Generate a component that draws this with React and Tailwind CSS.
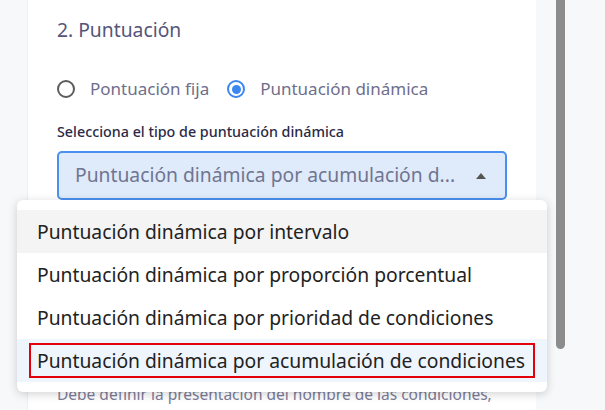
import React from 'react';

const options = [
  'Puntuación dinámica por intervalo',
  'Puntuación dinámica por proporción porcentual',
  'Puntuación dinámica por prioridad de condiciones',
  'Puntuación dinámica por acumulación de condiciones',
];

function Radio({ checked, label }) {
  return (
    <label className="flex items-center gap-[15px]">
      {checked ? (
        <span className="flex h-[18px] w-[18px] items-center justify-center rounded-full border-2 border-[#3b86f0]">
          <span className="h-[9px] w-[9px] rounded-full bg-[#3b86f0]" />
        </span>
      ) : (
        <span className="h-[18px] w-[18px] rounded-full border-2 border-[#5c5c5c]" />
      )}
      <span className="text-[17px] leading-[24px] text-[#6e6e8c]">{label}</span>
    </label>
  );
}

export default function App() {
  return (
    <div className="flex h-[410px] w-[605px] overflow-hidden bg-[#f7f8fa]" style={{ fontFamily: '"Noto Sans", "Open Sans", sans-serif' }}>
      <div className="ml-[27px] w-[509px] shrink-0 border-l border-[#eceef2] bg-white pl-[29px] pt-[16px]">
        <h2 className="text-[19.3px] leading-[28px] text-[#55557a]">2. Puntuación</h2>

        <div className="mt-[33px] flex items-center gap-[18px]">
          <Radio label="Pontuación fija" />
          <Radio checked label="Puntuación dinámica" />
        </div>

        <div className="mt-[21px] text-[14.3px] leading-[20px] font-medium text-[#2b2946]">Selecciona el tipo de puntuación dinámica</div>

        <div className="relative mt-[9px] w-[450px]">
          <div className="flex h-[49px] items-center justify-between rounded-[5px] border-2 border-[#4a90ee] bg-[#dfeafb] pl-[16px] pr-[16px]">
            <span className="whitespace-nowrap text-[19.3px] text-[#6f7590]">Puntuación dinámica por acumulación d...</span>
            <svg width="12" height="8" viewBox="0 0 12 8" className="mr-[2px]">
              <path d="M6 1 L11 7 L1 7 Z" fill="#555" />
            </svg>
          </div>

          <div className="absolute left-[-40px] top-[49px] z-10 w-[530px] rounded-[6px] bg-white py-[10px] shadow-[0_2px_10px_rgba(0,0,0,0.18)]">
            {options.map((o, i) => (
              <div
                key={o}
                className={
                  i === 0
                    ? 'flex h-[43px] items-center whitespace-nowrap bg-[#f4f4f4] px-[20px] text-[19.3px] leading-[26px] text-[#222]'
                    : i === 3
                    ? 'flex h-[43px] items-center whitespace-nowrap bg-[#eef5fd] px-[12px] text-[19.3px] leading-[26px] text-[#222]'
                    : 'flex h-[43px] items-center whitespace-nowrap px-[20px] text-[19.3px] leading-[26px] text-[#222]'
                }
              >
                {i === 3 ? (
                  <div className="flex h-[35px] w-full items-center border-2 border-[#e3000b] px-[6px]">{o}</div>
                ) : (
                  o
                )}
              </div>
            ))}
          </div>
        </div>

        <p className="mt-[183px] pr-[30px] text-[15.5px] leading-[22px] text-[#7c7c98]">
          Debe definir la presentación del nombre de las condiciones, las cuales se mostrarán en el resultado de la evaluación.
        </p>
      </div>
      <div className="ml-[20px] h-[349px] w-[9px] rounded-b-full bg-[#8c8c8c]" />
    </div>
  );
}
